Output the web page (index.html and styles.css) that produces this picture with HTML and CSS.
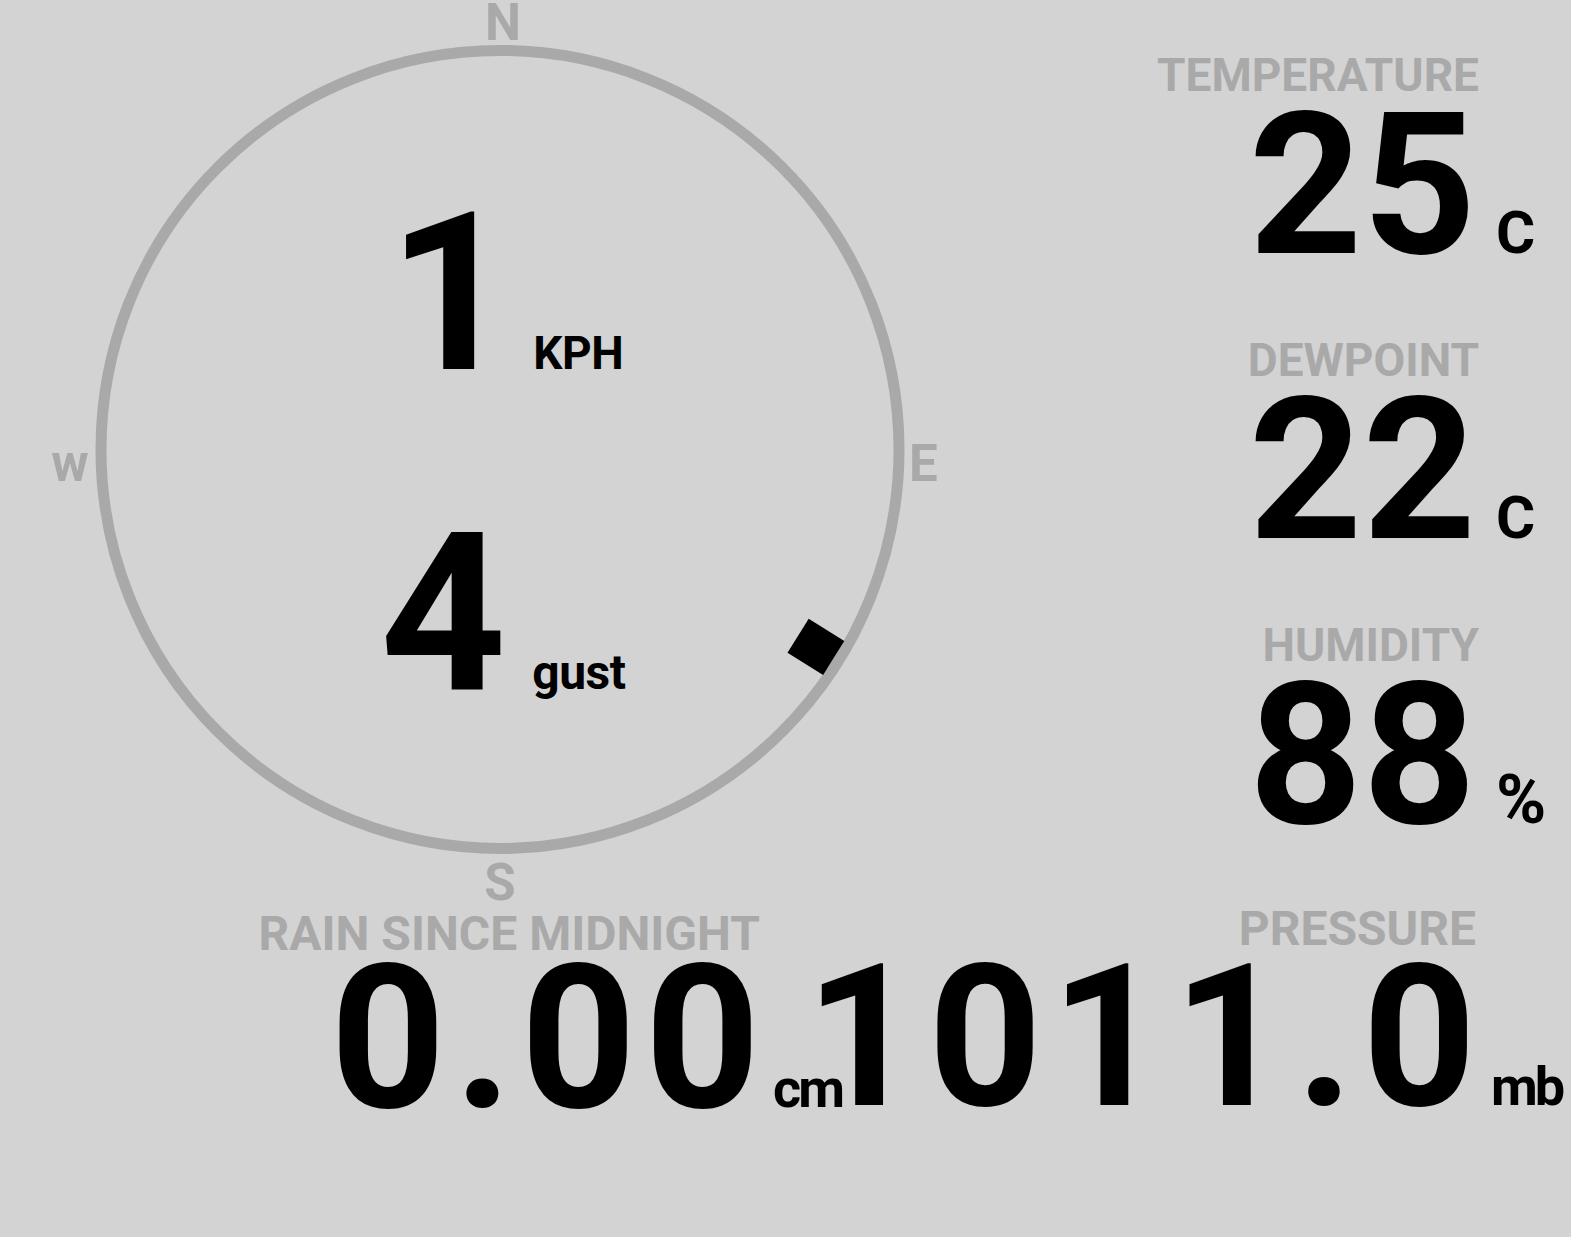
FILE: index.html
```html
<!DOCTYPE html>
<html lang="en">
<head>
<meta charset="utf-8">
<title>Weather</title>
<link rel="stylesheet" href="styles.css">
</head>
<body>
<div class="dashboard">
  <section class="top">
    <div class="compass">
      <svg class="dial" viewBox="0 0 1000 904" width="1000" height="904">
        <circle cx="500" cy="449.5" r="399" fill="none" stroke="#a9a9a9" stroke-width="11"/>
        <text class="cardinal" x="503" y="40" text-anchor="middle">N</text>
        <text class="cardinal" x="909" y="481">E</text>
        <text class="cardinal" x="500" y="900" text-anchor="middle">S</text>
        <text class="cardinal" x="70" y="481" text-anchor="middle">w</text>
        <rect x="480" y="56" width="40" height="42" fill="#000" transform="rotate(122 500 449.5)"/>
      </svg>
      <div class="wind wind-speed">
        <span class="wind-num">1</span><span class="wind-unit">KPH</span>
      </div>
      <div class="wind wind-gust">
        <span class="wind-num">4</span><span class="wind-unit">gust</span>
      </div>
    </div>
    <div class="stats">
      <div class="stat">
        <div class="label">TEMPERATURE</div>
        <div class="value"><span class="num">25</span><span class="unit">C</span></div>
      </div>
      <div class="stat">
        <div class="label">DEWPOINT</div>
        <div class="value"><span class="num">22</span><span class="unit">C</span></div>
      </div>
      <div class="stat">
        <div class="label">HUMIDITY</div>
        <div class="value"><span class="num">88</span><span class="unit pct">%</span></div>
      </div>
    </div>
  </section>
  <section class="bottom">
    <div class="big rain">
      <div class="label big-label">RAIN SINCE MIDNIGHT</div>
      <div class="value big-value"><span class="num rain-num">0.00</span><span class="unit small-unit">cm</span></div>
    </div>
    <div class="big pressure">
      <div class="label big-label">PRESSURE</div>
      <div class="value big-value"><span class="num pressure-num">1011.0</span><span class="unit small-unit">mb</span></div>
    </div>
  </section>
</div>
</body>
</html>
```
FILE: styles.css
```css
html, body {
  margin: 0;
  padding: 0;
}
body {
  background: #d3d3d3;
  width: 1571px;
  height: 1237px;
  overflow: hidden;
  font-family: "Roboto", "Liberation Sans", sans-serif;
  font-weight: 700;
  color: #000;
}
.dashboard {
  display: flex;
  flex-direction: column;
}
.top {
  display: flex;
  height: 904px;
}
.compass {
  position: relative;
  width: 1000px;
  height: 904px;
  flex: none;
  display: flex;
  flex-direction: column;
  align-items: flex-start;
  padding-top: 194px;
  box-sizing: border-box;
}
.dial {
  position: absolute;
  left: 0;
  top: 0;
}
.cardinal {
  font-family: "Roboto", "Liberation Sans", sans-serif;
  font-weight: 700;
  font-size: 51px;
  fill: #a9a9a9;
}
.wind {
  position: relative;
  display: flex;
  align-items: baseline;
  height: 200px;
  line-height: 200px;
}
.wind-speed {
  margin-left: 388px;
}
.wind-gust {
  margin-top: 120px;
  margin-left: 380px;
}
.wind-num {
  font-size: 220px;
}
.wind-unit {
  font-size: 46px;
  line-height: 1;
  margin-left: 19px;
  letter-spacing: -0.5px;
}
.wind-gust .wind-unit {
  font-size: 48px;
  margin-left: 26px;
}
.stats {
  flex: 1;
  display: flex;
  flex-direction: column;
  gap: 65px;
  padding-top: 50px;
  padding-right: 95px;
}
.label {
  text-align: right;
  color: #a9a9a9;
  font-size: 46px;
  line-height: 50px;
  white-space: nowrap;
  margin-right: -3px;
}
.value {
  display: flex;
  justify-content: flex-end;
  align-items: baseline;
  height: 170px;
  line-height: 170px;
}
.num {
  font-size: 198px;
  white-space: nowrap;
}
.unit {
  width: 0;
  text-indent: 20px;
  white-space: nowrap;
  font-size: 60px;
  line-height: 1;
}
.unit.pct {
  font-size: 68px;
  text-indent: 20px;
}
.unit.small-unit {
  font-size: 54px;
  letter-spacing: -3px;
}
.bottom {
  display: flex;
}
.big-label {
  font-size: 48px;
  line-height: 50px;
  margin-right: 0;
}
.big-value {
  height: 160px;
  line-height: 160px;
}
.rain {
  width: 760px;
  flex: none;
  margin-top: 5px;
}
.rain .unit {
  text-indent: 13px;
}
.rain-num {
  font-size: 201px;
  letter-spacing: 8.5px;
  margin-right: -8.5px;
}
.pressure {
  flex: 1;
  padding-right: 95px;
}
.pressure .big-value {
  margin-top: 3px;
}
.pressure-num {
  font-size: 198px;
  letter-spacing: 9px;
  margin-right: -9px;
}
.pressure .unit {
  text-indent: 15px;
}
```
